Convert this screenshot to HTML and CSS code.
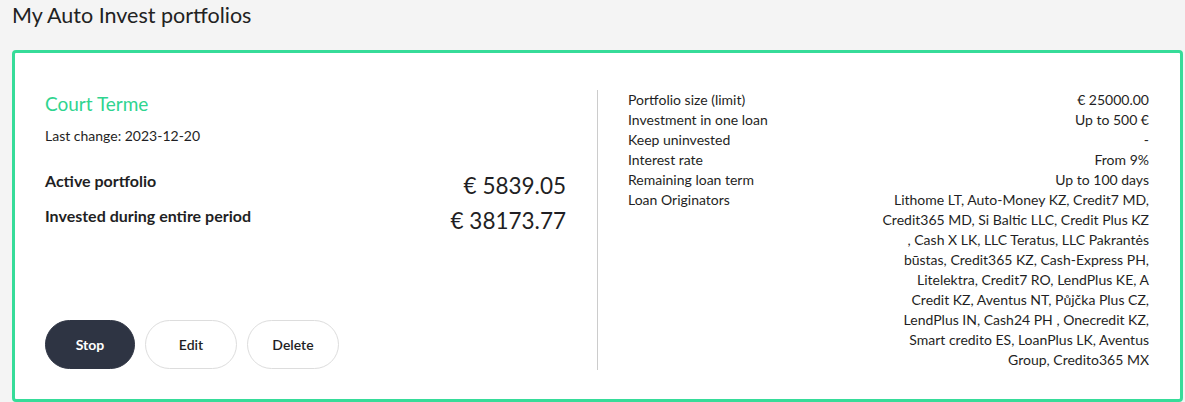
FILE: index.html
```html
<html>
  <head>
    <title>My Auto Invest portfolios</title>
    <link rel="stylesheet" href="styles.css">
  </head>
  <body>
    <h1 class="page-title">My Auto Invest portfolios</h1>
    <div class="portfolio">
      <div class="portfolio-main">
        <div class="portfolio-name">Court Terme</div>
        <div class="portfolio-date">Last change: 2023-12-20</div>
        <div class="stats">
          <div class="stat">
            <span class="stat-label">Active portfolio</span>
            <span class="stat-value">€ 5839.05</span>
          </div>
          <div class="stat">
            <span class="stat-label">Invested during entire period</span>
            <span class="stat-value">€ 38173.77</span>
          </div>
        </div>
        <div class="actions">
          <button class="btn btn-dark">Stop</button>
          <button class="btn">Edit</button>
          <button class="btn">Delete</button>
        </div>
      </div>
      <div class="portfolio-details">
        <div class="detail"><span>Portfolio size (limit)</span><span class="detail-value">€ 25000.00</span></div>
        <div class="detail"><span>Investment in one loan</span><span class="detail-value">Up to 500 €</span></div>
        <div class="detail"><span>Keep uninvested</span><span class="detail-value">-</span></div>
        <div class="detail"><span>Interest rate</span><span class="detail-value">From 9%</span></div>
        <div class="detail"><span>Remaining loan term</span><span class="detail-value">Up to 100 days</span></div>
        <div class="detail">
          <span>Loan Originators</span>
          <span class="detail-value">Lithome LT, Auto-Money KZ, Credit7 MD,<br>Credit365 MD, Si Baltic LLC, Credit Plus KZ<br>, Cash X LK, LLC Teratus, LLC Pakrantės<br>būstas, Credit365 KZ, Cash-Express PH,<br>Litelektra, Credit7 RO, LendPlus KE, A<br>Credit KZ, Aventus NT, Půjčka Plus CZ,<br>LendPlus IN, Cash24 PH , Onecredit KZ,<br>Smart credito ES, LoanPlus LK, Aventus<br>Group, Credito365 MX</span>
        </div>
      </div>
    </div>
  </body>
</html>
```

FILE: styles.css
```css
body {
  margin: 0;
  padding: 0 2px 0 12px;
  background: #f4f4f4;
  font-family: Lato, "Liberation Sans", sans-serif;
  color: #1f1f24;
}
.page-title {
  margin: 0 0 20px 0;
  font-size: 21.5px;
  line-height: 30px;
  font-weight: normal;
  color: #222222;
}
.portfolio {
  display: grid;
  grid-template-columns: 1fr 1fr;
  height: 352px;
  box-sizing: border-box;
  padding: 37px 31px 29px 30px;
  background: white;
  border: 3px solid #36dc99;
  border-radius: 4px;
}
.portfolio-main {
  display: flex;
  flex-direction: column;
  padding-right: 31px;
}
.portfolio-name {
  font-size: 19px;
  line-height: 28px;
  color: #2fd48f;
}
.portfolio-date {
  margin-top: 8px;
  font-size: 14px;
  line-height: 20px;
}
.stats {
  margin-top: 25px;
}
.stat {
  display: flex;
  justify-content: space-between;
  align-items: flex-start;
  margin-bottom: 5px;
}
.stat-label {
  font-size: 16px;
  line-height: 20px;
  font-weight: bold;
}
.stat-value {
  font-size: 22.5px;
  line-height: 30px;
}
.actions {
  display: flex;
  gap: 10px;
  margin-top: auto;
  margin-bottom: 1px;
}
.btn {
  width: 92px;
  height: 49px;
  border: 1px solid #dddddd;
  border-radius: 25px;
  background: white;
  color: #1f1f24;
  font-family: inherit;
  font-size: 14px;
  font-weight: 600;
}
.btn-dark {
  width: 90px;
  border-color: #2e3443;
  background: #2e3443;
  color: white;
  font-weight: bold;
}
.portfolio-details {
  border-left: 1px solid #cccccc;
  padding-left: 30px;
  font-size: 14px;
  line-height: 20px;
}
.detail {
  display: flex;
  justify-content: space-between;
  align-items: flex-start;
}
.detail-value {
  text-align: right;
}
```
